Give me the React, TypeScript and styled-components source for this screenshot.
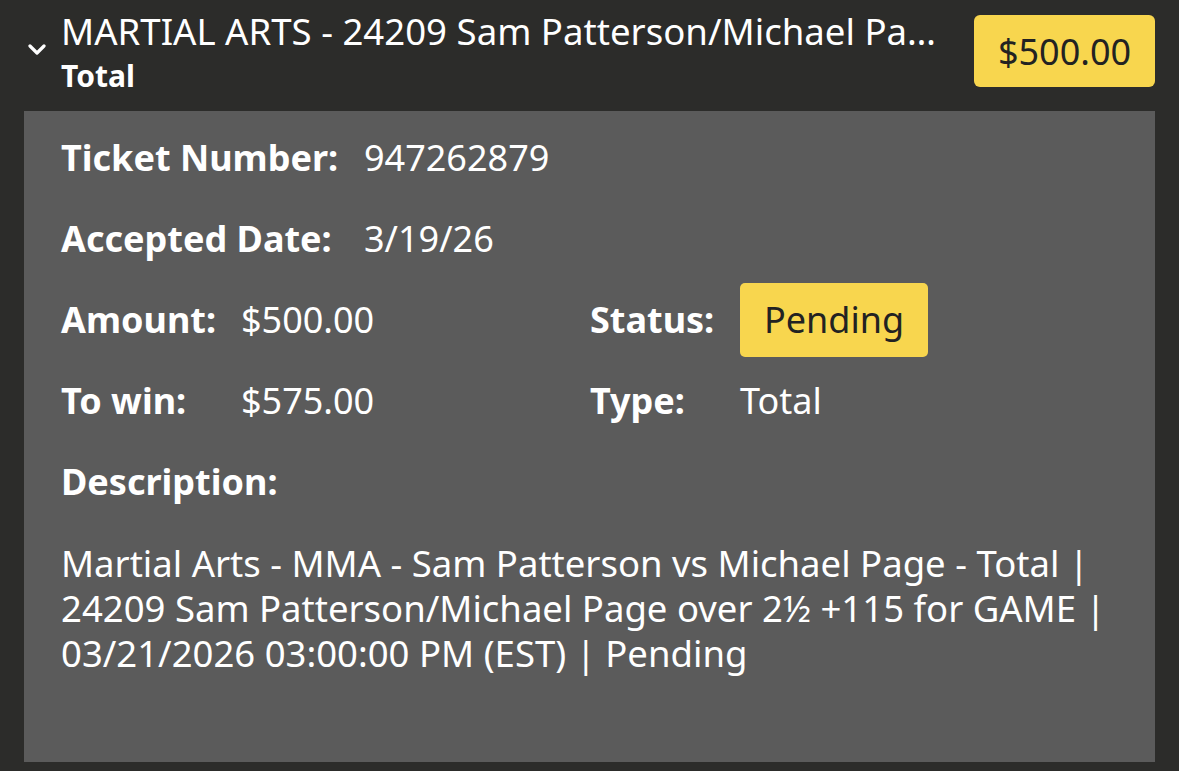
import React from "react";
import styled, { createGlobalStyle } from "styled-components";

const GlobalStyle = createGlobalStyle`
  html, body {
    margin: 0;
    padding: 0;
    background: #2c2c2a;
  }
  body {
    font-family: 'Noto Sans', 'Open Sans', sans-serif;
    color: #ffffff;
  }
`;

const Page = styled.div`
  width: 1179px;
  height: 771px;
  background: #2c2c2a;
  overflow: hidden;
`;

const Header = styled.div`
  display: flex;
  align-items: flex-start;
  height: 111px;
  padding: 0 24px;
  box-sizing: border-box;
`;

const Toggle = styled.div`
  width: 37px;
  flex-shrink: 0;
  padding: 44px 0 0 4px;
  box-sizing: border-box;
  display: flex;
`;

const TitleBlock = styled.div`
  flex: 1;
  min-width: 0;
  padding-top: 8px;
  padding-right: 26px;
`;

const Title = styled.div`
  font-size: 36.6px;
  line-height: 46px;
  white-space: nowrap;
  overflow: hidden;
  text-overflow: ellipsis;
`;

const Subtitle = styled.div`
  font-size: 30px;
  font-weight: 700;
  line-height: 44px;
`;

const Badge = styled.div`
  display: inline-flex;
  align-items: center;
  justify-content: center;
  background: #f8d64e;
  color: #222222;
  border-radius: 6px;
  font-size: 36px;
  height: 72px;
  padding: 0 20px;
  box-sizing: border-box;
`;

const PriceBadge = styled(Badge)`
  flex-shrink: 0;
  margin-top: 15px;
  width: 181px;
`;

const Panel = styled.div`
  margin: 0 24px;
  height: 651px;
  background: #5b5b5b;
  padding: 6px 20px 0 37px;
  box-sizing: border-box;
  font-size: 36px;
`;

const Row = styled.div<{ $cols: string }>`
  display: grid;
  grid-template-columns: ${(p) => p.$cols};
  align-items: center;
  height: 81px;
`;

const Label = styled.div`
  font-weight: 700;
  line-height: 48px;
`;

const Value = styled.div`
  line-height: 48px;
`;

const StatusBadge = styled(Badge)`
  height: 74px;
  width: 188px;
  border-radius: 5px;
  justify-self: start;
`;

const Description = styled.div`
  margin-top: 19px;
  font-size: 36.5px;
  line-height: 45px;
`;

export default function App() {
  return (
    <Page>
      <GlobalStyle />
      <Header>
        <Toggle>
          <svg width="18" height="12" viewBox="0 0 18 12" fill="none">
            <polyline
              points="2,2 9,9 16,2"
              stroke="#ffffff"
              strokeWidth="3.2"
              strokeLinecap="round"
              strokeLinejoin="round"
            />
          </svg>
        </Toggle>
        <TitleBlock>
          <Title>MARTIAL ARTS - 24209 Sam Patterson/Michael Page</Title>
          <Subtitle>Total</Subtitle>
        </TitleBlock>
        <PriceBadge>$500.00</PriceBadge>
      </Header>
      <Panel>
        <Row $cols="303px 1fr">
          <Label>Ticket Number:</Label>
          <Value>947262879</Value>
        </Row>
        <Row $cols="303px 1fr">
          <Label>Accepted Date:</Label>
          <Value>3/19/26</Value>
        </Row>
        <Row $cols="180px 349px 150px 1fr">
          <Label>Amount:</Label>
          <Value>$500.00</Value>
          <Label>Status:</Label>
          <StatusBadge>Pending</StatusBadge>
        </Row>
        <Row $cols="180px 349px 150px 1fr">
          <Label>To win:</Label>
          <Value>$575.00</Value>
          <Label>Type:</Label>
          <Value>Total</Value>
        </Row>
        <Row $cols="1fr">
          <Label>Description:</Label>
        </Row>
        <Description>
          Martial Arts - MMA - Sam Patterson vs Michael Page - Total | 24209 Sam
          Patterson/Michael Page over 2½ +115 for GAME | 03/21/2026 03:00:00 PM
          (EST) | Pending
        </Description>
      </Panel>
    </Page>
  );
}
